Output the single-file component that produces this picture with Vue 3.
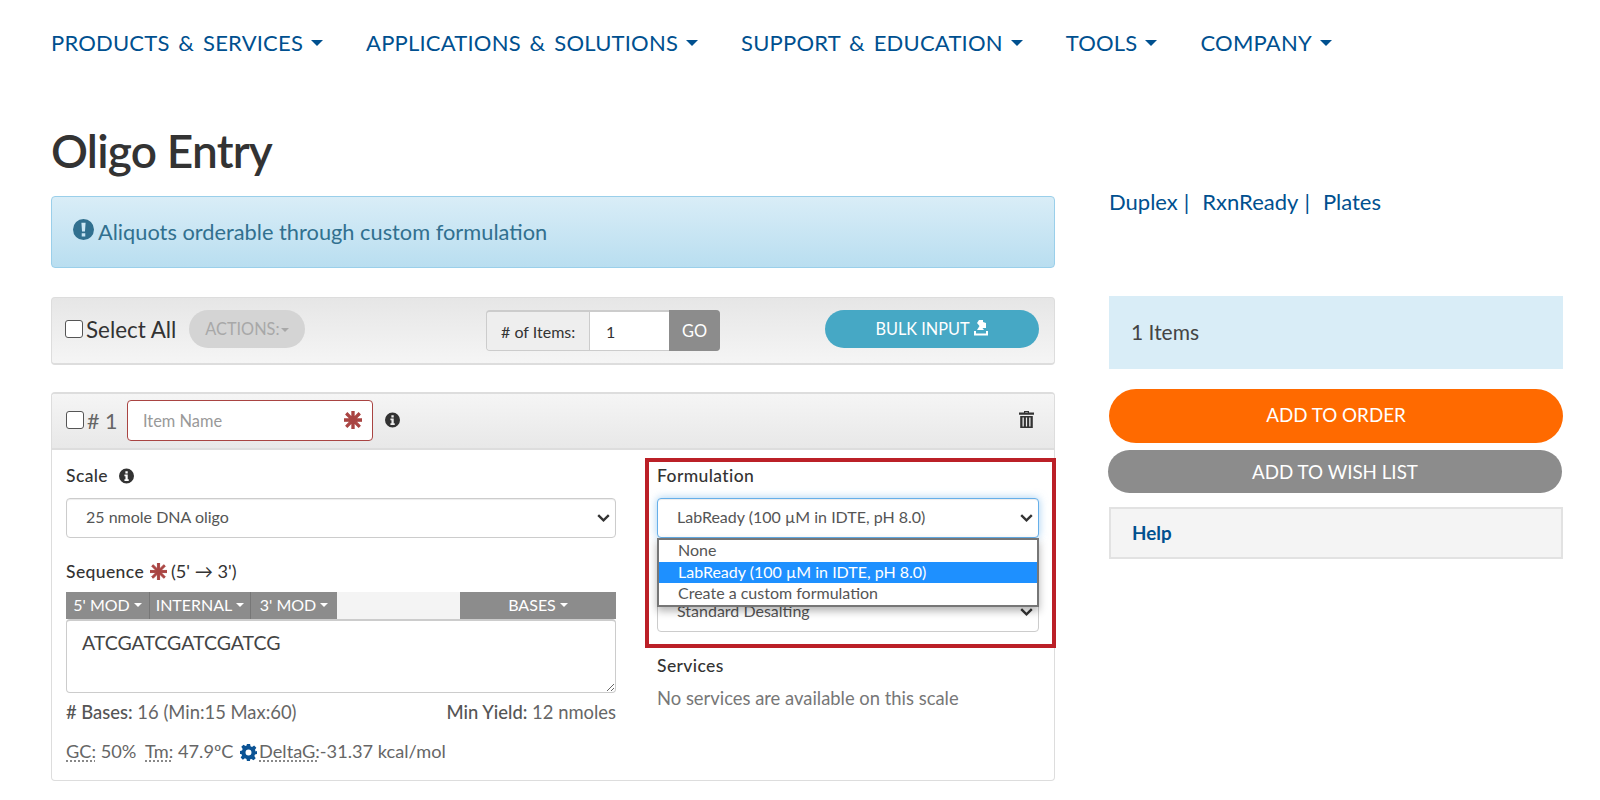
<script setup>
const navItems = ['PRODUCTS & SERVICES', 'APPLICATIONS & SOLUTIONS', 'SUPPORT & EDUCATION', 'TOOLS', 'COMPANY']
const mods = ["5' MOD", 'INTERNAL', "3' MOD"]
const formulations = ['None', 'LabReady (100 µM in IDTE, pH 8.0)', 'Create a custom formulation']
const starPath = 'M7 0h2v5.600L13 1.600l1.400 1.400L10.400 7H16v2h-5.600l4 4L13 14.400l-4-4V16H7v-5.600l-4 4L1.600 13l4-4H0V7h5.600l-4-4L3 1.600l4 4z'
const cogPath = 'M6.500 0h3l.4 2.200 1.400.6L13.300 1.500l2.100 2.100-1.300 1.900.6 1.500L16 6.500v3l-1.900.4-.6 1.500 1.300 1.900-2.100 2.100-1.900-1.300-1.500.6L9.500 16h-3l-.4-1.900-1.500-.6-1.900 1.300L.6 12.700l1.300-1.900-.6-1.400L0 9.500v-3l1.900-.4.600-1.500L1.200 2.700 3.300.6 5.200 1.900l1-.4zM8 5.200a2.800 2.800 0 1 0 0 5.600a2.800 2.800 0 0 0 0-5.600z'
const infoPath = 'M8 0a8 8 0 1 0 0 16A8 8 0 0 0 8 0zM6.800 2.800h2.500v2.400H6.800zM5.800 6.500h3.500v5h1.100v1.800H5.800v-1.800h1.100V8.300H5.800z'
</script>

<template>
  <div class="page">
    <nav class="nav">
      <a v-for="n in navItems" :key="n" class="nav-item">{{ n }}<i class="nav-caret"></i></a>
    </nav>
    <h1 class="title">Oligo Entry</h1>
    <div class="columns">
      <main class="left">
        <div class="alert">
          <svg class="alert-icon" viewBox="0 0 20 20"><path fill="#31708f" fill-rule="evenodd" d="M10 0a10 10 0 1 0 0 20a10 10 0 0 0 0-20zM8 3.500h4l-.6 8.500H8.600zM8.300 13.500h3.400v3.200H8.300z"/></svg>
          <span>Aliquots orderable through custom formulation</span>
        </div>

        <div class="toolbar">
          <label class="select-all"><span class="check"></span>Select All</label>
          <button class="actions">ACTIONS:<i class="caret"></i></button>
          <div class="input-group">
            <span class="addon"># of Items:</span>
            <span class="count">1</span>
            <span class="go">GO</span>
          </div>
          <button class="bulk">BULK INPUT
            <svg class="bulk-icon" viewBox="0 0 16 16"><path fill="#fff" d="M6 0h4v2l3 1v5H9.500l1.500 2H4l2.500-4L4 3zM1 11h2v2.500h10V11h2v4.500H1z"/></svg>
          </button>
        </div>

        <section class="panel">
          <header class="panel-head">
            <span class="check small"></span>
            <span class="num"># 1</span>
            <div class="name-box">
              <span>Item Name</span>
              <svg class="star" viewBox="0 0 16 16"><path fill="#a94442" :d="starPath" stroke="#a94442" stroke-width=".9"/></svg>
            </div>
            <svg class="info" viewBox="0 0 16 16"><path fill="#333" fill-rule="evenodd" :d="infoPath"/></svg>
            <svg class="trash" viewBox="0 0 15 17"><path fill="#333" fill-rule="evenodd" d="M5 0h5v1.500h5v2.300H0V1.500h5zM6.200 1v.6h2.600V1zM1.200 5h12.600v12H1.200zM3.500 6.500v9h1.300v-9zM6.900 6.500v9h1.200v-9zM10.200 6.500v9h1.300v-9z"/></svg>
          </header>

          <div class="panel-body">
            <div class="col">
              <label class="label first">Scale
                <svg class="info label-info" viewBox="0 0 16 16"><path fill="#333" fill-rule="evenodd" :d="infoPath"/></svg>
              </label>
              <div class="select-wrap">
                <select class="control"><option>25 nmole DNA oligo</option></select>
                <svg class="chevron" viewBox="0 0 13 8"><path d="M1.200 1.200L6.500 6.300L11.800 1.200" fill="none" stroke="#333" stroke-width="2.400"/></svg>
              </div>

              <label class="label seq">Sequence
                <svg class="star inline" viewBox="0 0 16 16"><path fill="#a94442" :d="starPath" stroke="#a94442" stroke-width=".9"/></svg>
                <span class="normal">(5' → 3')</span>
              </label>
              <div class="mods">
                <span v-for="m in mods" :key="m" class="mod">{{ m }}<i class="caret white"></i></span>
                <span class="mods-gap"></span>
                <span class="bases">BASES<i class="caret white"></i></span>
              </div>
              <textarea class="seq-area" spellcheck="false">ATCGATCGATCGATCG</textarea>
              <div class="stats">
                <span><b># Bases:</b> 16 (Min:15 Max:60)</span>
                <span><b>Min Yield:</b> 12 nmoles</span>
              </div>
              <div class="thermo">
                <abbr>GC:</abbr> 50% &nbsp;<abbr>Tm:</abbr> 47.9ºC
                <svg class="cog" viewBox="0 0 16 16"><path fill="#0b5394" fill-rule="evenodd" :d="cogPath"/></svg>
                <abbr>DeltaG:</abbr>-31.37 kcal/mol
              </div>
            </div>

            <div class="col">
              <label class="label first">Formulation</label>
              <div class="select-wrap">
                <select class="control focus"><option>LabReady (100 µM in IDTE, pH 8.0)</option></select>
                <svg class="chevron" viewBox="0 0 13 8"><path d="M1.200 1.200L6.500 6.300L11.800 1.200" fill="none" stroke="#333" stroke-width="2.400"/></svg>
              </div>
              <div class="label-spacer"></div>
              <div class="select-wrap">
                <select class="control"><option>Standard Desalting</option></select>
                <svg class="chevron" viewBox="0 0 13 8"><path d="M1.200 1.200L6.500 6.300L11.800 1.200" fill="none" stroke="#333" stroke-width="2.400"/></svg>
              </div>
              <label class="label services">Services</label>
              <p class="none-text">No services are available on this scale</p>

              <ul class="dropdown">
                <li v-for="(f, i) in formulations" :key="f" :class="{ active: i === 1 }">{{ f }}</li>
              </ul>
              <div class="callout"></div>
            </div>
          </div>
        </section>
      </main>

      <aside class="right">
        <div class="links">
          <a>Duplex</a><span class="sep">|</span><a>RxnReady</a><span class="sep">|</span><a>Plates</a>
        </div>
        <div class="summary">1 Items</div>
        <button class="btn-order">ADD TO ORDER</button>
        <button class="btn-wish">ADD TO WISH LIST</button>
        <div class="help">Help</div>
      </aside>
    </div>
  </div>
</template>

<style>
html, body { margin: 0; background: #fff; }
</style>

<style scoped>
* { box-sizing: border-box; }
.page { width: 1600px; height: 800px; overflow: hidden; padding: 0 37px 0 51px; font-family: Lato, "Open Sans", sans-serif; font-size: 16px; color: #333; }

.nav { height: 85px; display: flex; align-items: center; gap: 43px; }
.nav-item { font-size: 22px; letter-spacing: .2px; word-spacing: 3px; color: #00508f; white-space: nowrap; display: flex; align-items: center; }
.nav-caret { display: inline-block; margin-left: 8px; border-top: 6px solid #00508f; border-left: 6px solid transparent; border-right: 6px solid transparent; }

.title { margin: 0; height: 111px; padding-top: 31px; font-size: 46px; line-height: 70px; font-weight: 600; color: #333; letter-spacing: -.8px; }

.columns { display: flex; gap: 54px; align-items: flex-start; }
.left { width: 1004px; flex: none; }
.right { width: 454px; flex: none; }

.alert { height: 72px; display: flex; align-items: center; gap: 4px; padding: 0 21px 2px; border: 1px solid #9acfea; border-radius: 4px; background: linear-gradient(#d9edf7, #b9def0); color: #31708f; font-size: 21.800px; }
.alert-icon { width: 21px; height: 21px; margin-top: -3px; }

.toolbar { height: 68px; margin-top: 29px; padding: 12px 13px 0; display: flex; align-items: flex-start; border: 1px solid #ddd; border-bottom-width: 2px; border-radius: 4px; background: linear-gradient(#e6e6e6, #f5f5f5); }
.toolbar > * { flex: none; }
.select-all { display: flex; align-items: center; gap: 3px; height: 38px; font-size: 22.400px; white-space: nowrap; }
.check { display: inline-block; width: 18px; height: 18px; border: 1px solid #555; border-radius: 3px; background: #fff; flex: none; }
.actions { width: 116px; height: 38px; margin-left: 13px; border: 0; border-radius: 19px; background: #d4d4d4; color: #a8a8a8; font: 16.300px Lato, sans-serif; padding: 0 0 2px; }
.caret { display: inline-block; vertical-align: middle; margin-left: 2px; border-top: 4px solid #a8a8a8; border-left: 4px solid transparent; border-right: 4px solid transparent; }
.caret.white { border-top-color: #fff; margin-left: 4px; }

.input-group { display: flex; width: 234px; height: 41px; margin-left: 181px; border: 1px solid #ccc; border-top-width: 2px; border-radius: 4px; font-size: 16px; }
.addon { width: 103px; display: flex; align-items: center; justify-content: center; background: #eee; border-right: 1px solid #ccc; border-radius: 3px 0 0 3px; white-space: nowrap; }
.count { width: 79px; background: #fff; padding: 6px 0 0 16px; line-height: 28px; }
.go { width: 52px; margin: -2px -1px -1px 0; display: flex; align-items: center; justify-content: center; background: #8c8c8c; color: #fff; font-size: 16.400px; border-radius: 0 4px 4px 0; }
.bulk { width: 214px; height: 38px; margin-left: 105px; border: 0; border-radius: 19px; background: #46a8c5; color: #fff; font: 16.300px Lato, sans-serif; padding: 0 0 2px; }
.bulk-icon { width: 16px; height: 16px; vertical-align: -1px; }

.panel { height: 389px; margin-top: 27px; border: 1px solid #ddd; border-top-width: 2px; border-radius: 4px; overflow: visible; }
.panel-head { height: 56px; padding: 0 15px 0 14px; display: flex; align-items: center; background: linear-gradient(#f5f5f5, #e8e8e8); border-bottom: 2px solid #ddd; border-radius: 3px 3px 0 0; }
.check.small { margin-top: -3px; }
.num { margin-left: 3px; font-size: 21.500px; color: #666; width: 40px; white-space: nowrap; }
.name-box { width: 246px; height: 41px; margin-top: -2px; padding: 0 10px 0 15px; display: flex; align-items: center; justify-content: space-between; background: #fff; border: 1px solid #a94442; border-radius: 4px; color: #999; font-size: 16.400px; }
.star { width: 18px; height: 18px; }
.star.inline { width: 17px; height: 17px; vertical-align: -2px; margin: 0 4px 0 1px; }
.info { width: 15px; height: 16px; margin-left: 12px; margin-top: -3px; }
.label-info { margin: 0 0 0 6px; vertical-align: -2px; }
.trash { width: 15px; height: 17px; margin-left: auto; margin-top: -3px; margin-right: 5px; }

.panel-body { display: grid; grid-template-columns: 550px 382px; column-gap: 41px; padding: 0 15px 0 14px; }
.col { position: relative; }
.label { display: block; height: 18px; line-height: 18px; font-size: 17.500px; letter-spacing: .4px; font-weight: 500; color: #333; white-space: nowrap; }
.label.first { margin-top: 17px; margin-bottom: 13px; }
.label.seq { margin-top: 24px; margin-bottom: 12px; }
.normal { font-weight: 400; letter-spacing: 0; font-size: 18.200px; }
.label-spacer { height: 54px; }
.label.services { margin-top: 25px; }
.select-wrap { position: relative; }
.chevron { position: absolute; right: 6px; top: 16px; width: 13px; height: 8px; pointer-events: none; }
.control { appearance: none; display: block; width: 100%; height: 40px; padding: 0 19px 3px; background-color: #fff; border: 1px solid #ccc; border-radius: 4px; font: 16px Lato, sans-serif; color: #555; box-shadow: inset 0 1px 1px rgba(0,0,0,.075); }
.control.focus { border-color: #66afe9; box-shadow: inset 0 1px 1px rgba(0,0,0,.075), 0 0 8px rgba(102,175,233,.6); }

.mods { display: flex; height: 27px; background: #f4f4f4; }
.mod { display: flex; align-items: center; justify-content: center; padding-bottom: 2px; background: #8c8c8c; color: #fff; font-size: 16px; border-right: 1px solid #777; width: 84px; white-space: nowrap; }
.mod:nth-child(2) { width: 101px; }
.mod:nth-child(3) { width: 86px; border-right: 0; }
.mods-gap { flex: 1; }
.bases { width: 156px; display: flex; align-items: center; justify-content: center; padding-bottom: 2px; background: #8c8c8c; color: #fff; font-size: 16px; }
.seq-area { display: block; width: 100%; height: 74px; padding: 11px 15px; border: 1px solid #ccc; border-top-width: 2px; border-radius: 4px; font: 19.500px Lato, sans-serif; line-height: 22px; color: #444; outline: none; resize: vertical; }
.stats { display: flex; justify-content: space-between; margin-top: 10px; height: 18px; line-height: 18px; font-size: 18.400px; color: #666; white-space: nowrap; }
.stats b { font-weight: 500; color: #555; }
.thermo { margin-top: 21px; height: 18px; line-height: 18px; font-size: 18.200px; color: #666; white-space: nowrap; }
abbr { text-decoration: underline dotted #888; text-underline-offset: 3px; }
.cog { width: 17px; height: 17px; vertical-align: -3px; margin: 0 2px; }
.none-text { margin: 14px 0 0; height: 18px; line-height: 18px; font-size: 18.400px; color: #777; }

.dropdown { position: absolute; left: 0; right: 0; top: 88px; height: 69px; margin: 0; padding: 0; list-style: none; background: #fff; border: 2px solid #767676; box-shadow: 0 4px 8px rgba(0,0,0,.3); font-size: 16px; color: #555; }
.dropdown li { height: 21.500px; line-height: 19.500px; padding-left: 19px; white-space: nowrap; }
.dropdown li.active { background: #1e90ff; color: #fff; }
.callout { position: absolute; left: -12px; top: 8px; width: 411px; height: 190px; border: 4px solid #bb2027; pointer-events: none; }

.links { height: 100px; font-size: 22px; line-height: 11px; color: #00508f; }
.links a { color: #00508f; }
.sep { margin: 0 13px 0 6px; color: #00508f; }
.summary { height: 73px; padding-left: 22px; line-height: 71px; background: #d9edf7; font-size: 21px; color: #444; }
.btn-order { display: block; width: 454px; height: 54px; margin-top: 20px; border: 0; border-radius: 27px; background: #ff6a00; color: #fff; font: 18.800px Lato, sans-serif; padding: 0 0 3px; }
.btn-wish { display: block; width: 454px; height: 43px; margin: 7px 0 0 -1px; border: 0; border-radius: 22px; background: #8c8c8c; color: #fff; font: 18.800px Lato, sans-serif; padding: 0 0 1px; }
.help { height: 52px; margin-top: 14px; padding-left: 21px; line-height: 48px; background: #f4f4f4; border: 2px solid #e2e2e2; font-size: 18.800px; font-weight: 700; color: #00508f; }
</style>
